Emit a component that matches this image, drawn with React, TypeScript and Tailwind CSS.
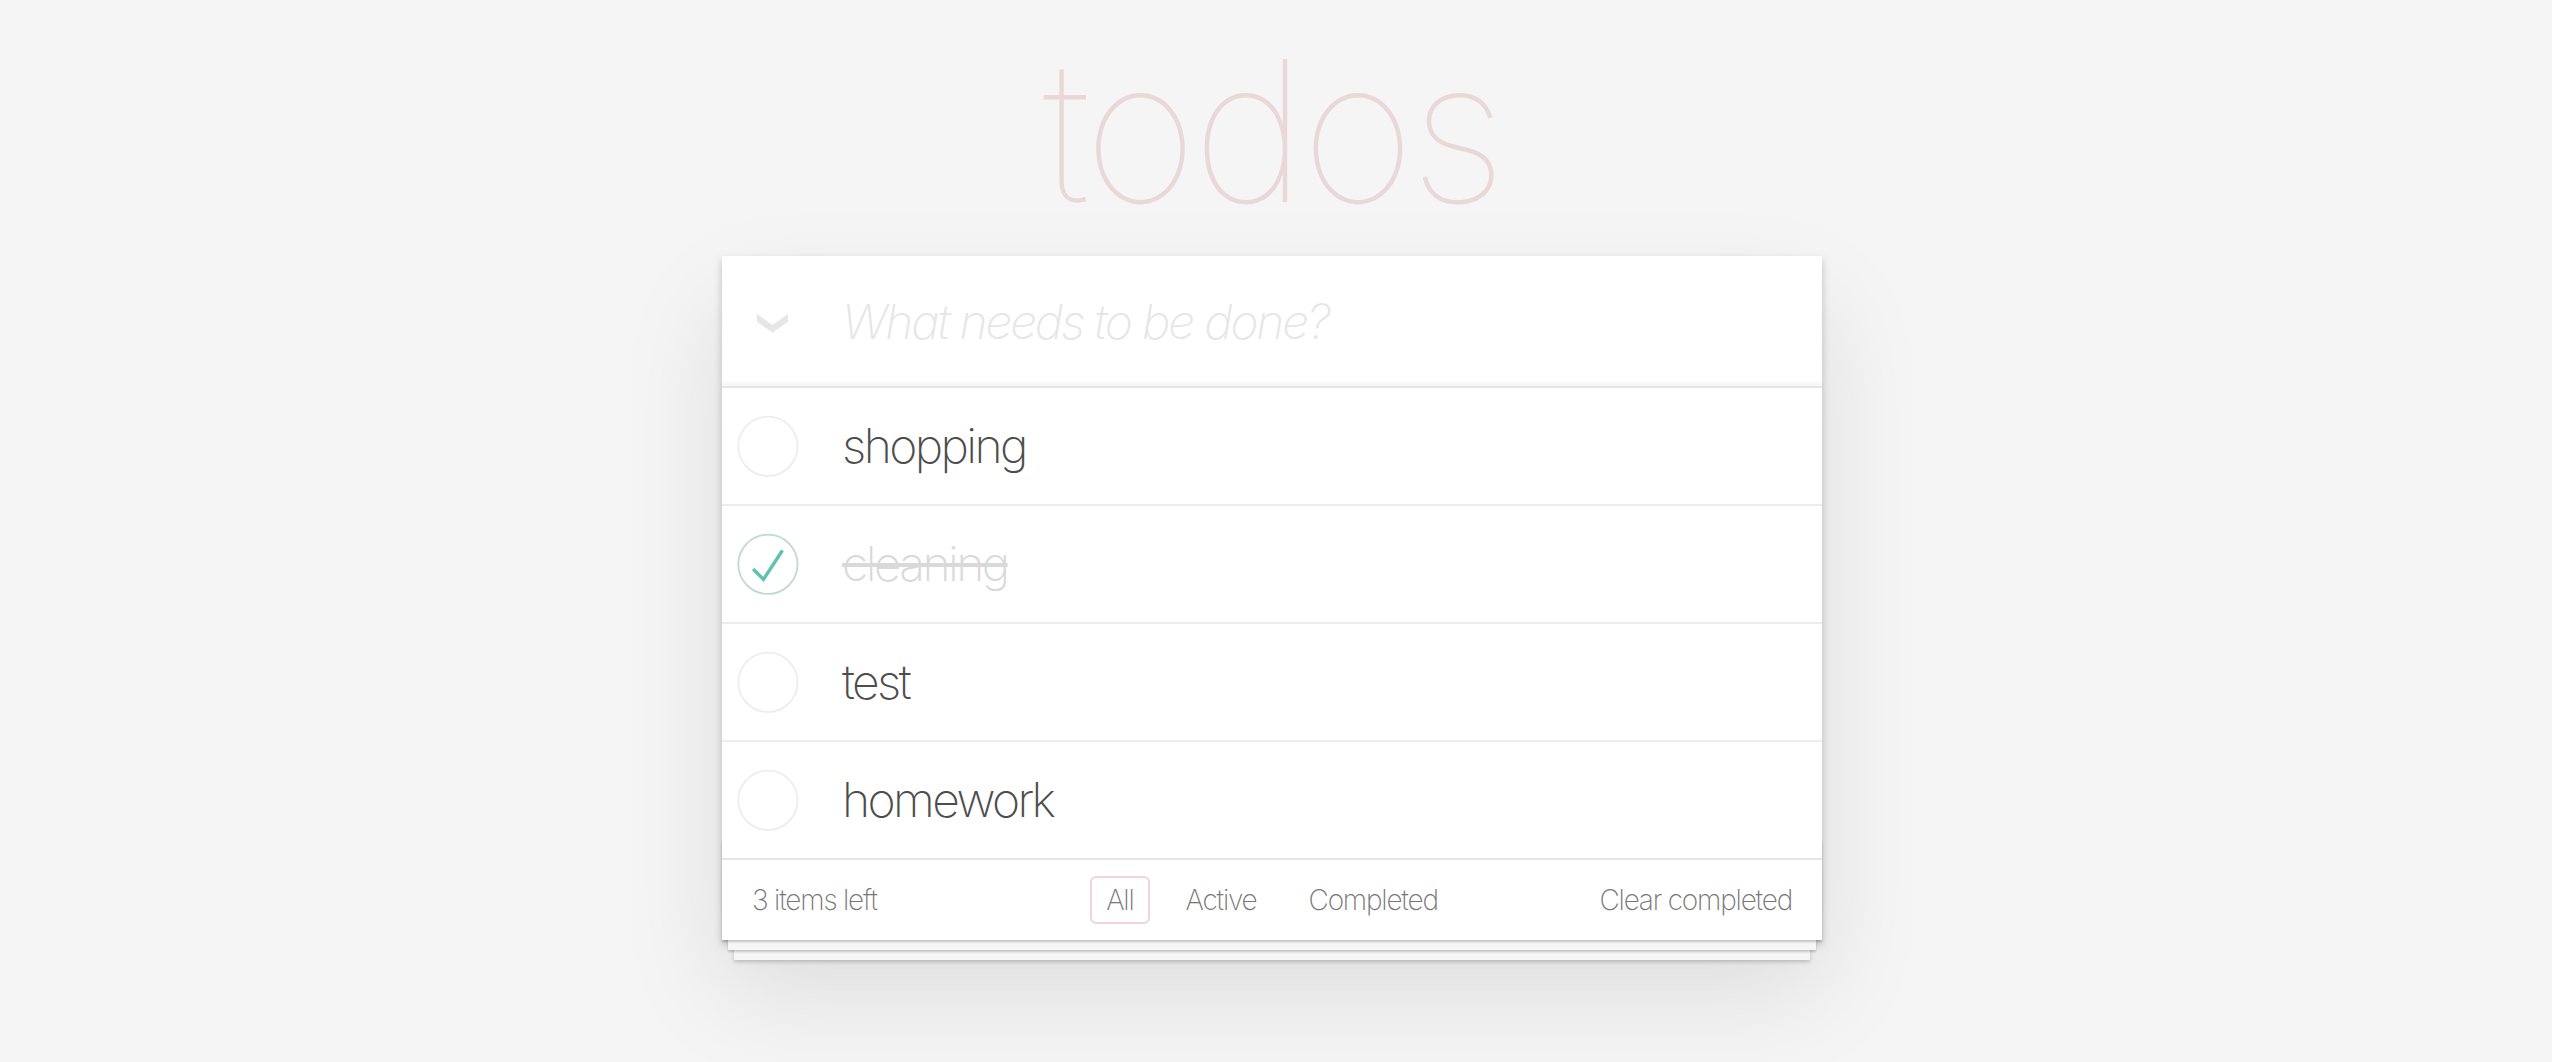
import React from "react";

const todos = [
  { text: "shopping", done: false },
  { text: "cleaning", done: true },
  { text: "test", done: false },
  { text: "homework", done: false },
];

function Toggle({ done }: { done: boolean }) {
  return (
    <svg width="80" height="80" viewBox="-10 -18 100 135" className="shrink-0">
      <circle cx="50" cy="50" r="50" fill="none" stroke={done ? "#bddad5" : "#ededed"} strokeWidth="3" />
      {done && <path fill="#5dc2af" d="M72 25L42 71 27 56l-4 4 20 20 34-52z" />}
    </svg>
  );
}

export default function App() {
  return (
    <div
      className="min-h-screen bg-[#f5f5f5] pr-2 flex flex-col items-center text-[#4d4d4d] antialiased"
      style={{ fontFamily: "Inter, 'Noto Sans', sans-serif" }}
    >
      <div className="w-[1100px] h-[256px] pt-[31px] text-center">
        <h1 className="text-[196px] leading-[200px] font-thin tracking-[-5px] text-[rgba(175,47,47,0.15)]">
          todos
        </h1>
      </div>
      <div className="w-[1100px] bg-white shadow-[0_4px_8px_0_rgba(0,0,0,0.2),0_50px_100px_0_rgba(0,0,0,0.1)]">
        <div className="h-[130px] flex items-center shadow-[inset_0_-4px_2px_rgba(0,0,0,0.03)]">
          <div className="w-[100px] flex justify-center mt-[4px]">
            <svg width="31" height="19" viewBox="0 0 31 19">
              <path d="M0 0 L15.5 11 L31 0 L31 7.7 L15.5 18.7 L0 7.7 Z" fill="#e6e6e6" />
            </svg>
          </div>
          <div className="ml-[20px] text-[48px] leading-[67px] italic font-[250] text-[#e6e6e6] tracking-[-2.2px]">
            What needs to be done?
          </div>
        </div>
        <ul className="border-t-2 border-[#e6e6e6]">
          {todos.map((t, i) => (
            <li
              key={i}
              className={`flex items-center ${
                i < todos.length - 1 ? "h-[118px] border-b-2 border-[#ededed]" : "h-[116px]"
              }`}
            >
              <Toggle done={t.done} />
              <span
                className={`ml-[40px] text-[48px] leading-[57.6px] font-[250] tracking-[-2.6px] ${
                  t.done ? "text-[#d9d9d9] line-through decoration-[#d9d9d9]" : "text-[#4d4d4d]"
                }`}
              >
                {t.text}
              </span>
            </li>
          ))}
        </ul>
        <div className="relative h-[82px] border-t-2 border-[#e6e6e6] text-[#777] text-[28px] leading-[40px] font-[250]">
          <div className="absolute left-0 right-0 bottom-0 h-[100px] shadow-[0_2px_2px_rgba(0,0,0,0.2),0_16px_0_-6px_#f6f6f6,0_18px_2px_-6px_rgba(0,0,0,0.2),0_32px_0_-12px_#f6f6f6,0_34px_4px_-12px_rgba(0,0,0,0.2)]" />
          <div className="relative h-[80px] bg-white grid grid-cols-[1fr_auto_1fr] items-center px-[30px] tracking-[-1.2px]">
            <span className="text-left">3 items left</span>
            <div className="flex items-center gap-[20px]">
              <a className="block px-[14px] py-[6px] leading-[32px] border-2 rounded-[6px] border-[rgba(175,47,47,0.2)]">All</a>
              <a className="block px-[14px] py-[6px] leading-[32px] border-2 rounded-[6px] border-transparent">Active</a>
              <a className="block px-[14px] py-[6px] leading-[32px] border-2 rounded-[6px] border-transparent">Completed</a>
            </div>
            <span className="text-right">Clear completed</span>
          </div>
        </div>
      </div>
    </div>
  );
}
